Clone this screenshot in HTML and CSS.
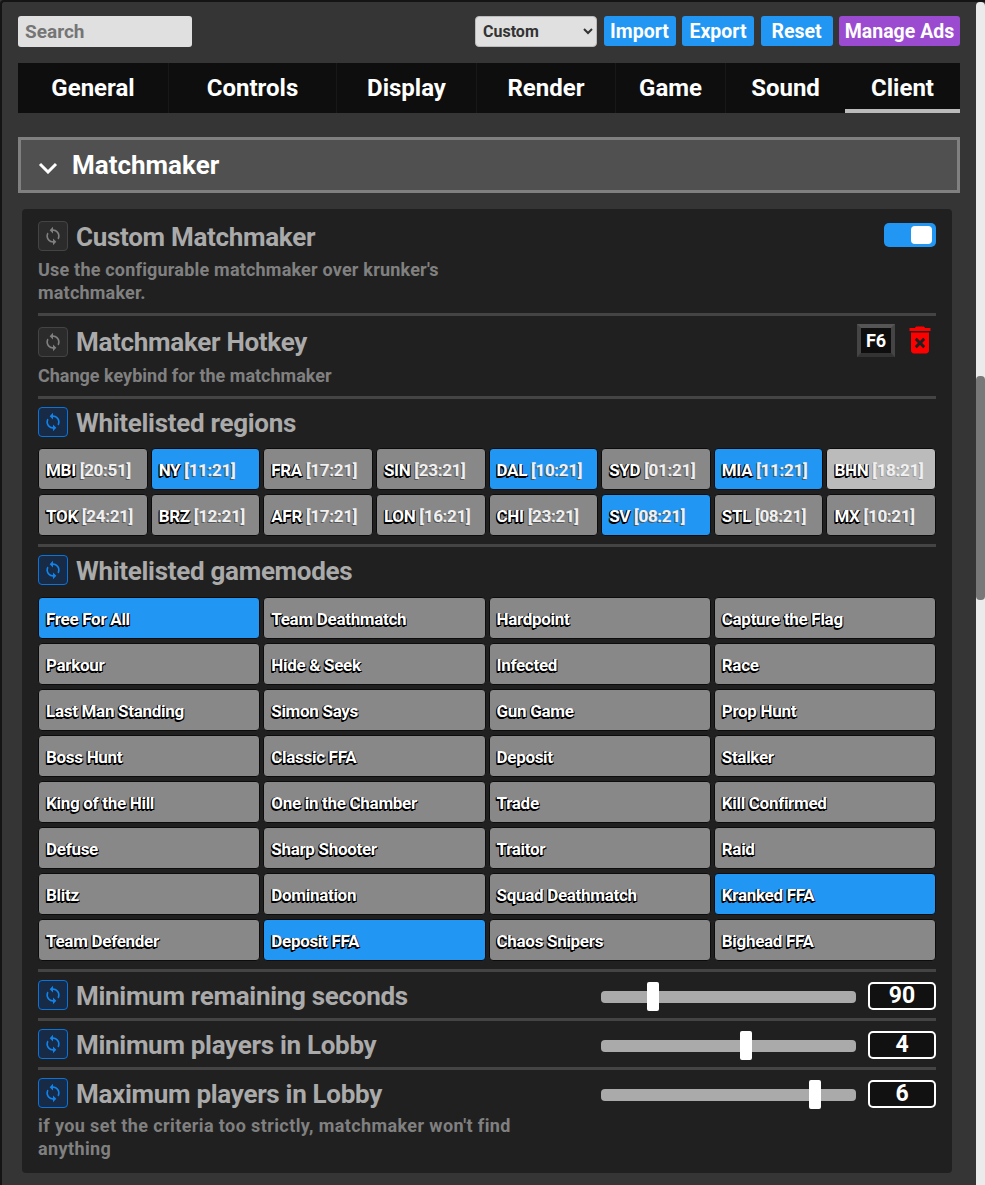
FILE: index.html
```html
<!DOCTYPE html>
<html lang="en">
<head>
    <meta charset="UTF-8">
    <meta name="viewport" content="width=device-width, initial-scale=1.0">
    <title>Settings</title>
    <link rel="stylesheet" href="styles.css">
</head>
<body>
    <svg class="icon-defs" width="0" height="0">
        <symbol id="sync" viewBox="0 0 24 24">
            <path d="M12 4V1L8 5l4 4V6c3.31 0 6 2.69 6 6 0 1.01-.25 1.97-.7 2.8l1.46 1.46C19.54 15.03 20 13.57 20 12c0-4.42-3.58-8-8-8zm0 14c-3.31 0-6-2.69-6-6 0-1.01.25-1.97.7-2.8L5.24 7.74C4.46 8.97 4 10.43 4 12c0 4.42 3.58 8 8 8v3l4-4-4-4v3z"/>
        </symbol>
    </svg>

    <div class="page">
        <div class="window">
            <div class="toolbar">
                <input class="search" type="text" placeholder="Search">
                <select class="preset">
                    <option>Custom</option>
                    <option>Default</option>
                </select>
                <div class="btn">Import</div>
                <div class="btn">Export</div>
                <div class="btn">Reset</div>
                <div class="btn btn-ads">Manage Ads</div>
            </div>

            <div class="tabs">
                <div class="tab">General</div>
                <div class="tab">Controls</div>
                <div class="tab">Display</div>
                <div class="tab">Render</div>
                <div class="tab">Game</div>
                <div class="tab">Sound</div>
                <div class="tab active">Client</div>
            </div>

            <div class="section-head">
                <svg class="chevron" width="20" height="12" viewBox="0 0 20 12">
                    <polyline points="2,2 10,10 18,2"/>
                </svg>
                <span>Matchmaker</span>
            </div>

            <div class="panel">
                <div class="row">
                    <div class="row-head">
                        <div class="reset-btn"><svg><use href="#sync"/></svg></div>
                        <div class="row-title">Custom Matchmaker</div>
                        <div class="toggle"><div class="knob"></div></div>
                    </div>
                    <div class="row-desc desc-short">Use the configurable matchmaker over krunker's matchmaker.</div>
                </div>

                <div class="row">
                    <div class="row-head hotkey">
                        <div class="reset-btn"><svg><use href="#sync"/></svg></div>
                        <div class="row-title">Matchmaker Hotkey</div>
                        <div class="key">F6</div>
                        <svg class="trash" width="36" height="36" viewBox="0 0 24 24">
                            <path d="M6 19c0 1.1.9 2 2 2h8c1.1 0 2-.9 2-2V7H6v12zm2.46-7.12l1.41-1.41L12 12.59l2.12-2.12 1.41 1.41L13.41 14l2.12 2.12-1.41 1.41L12 15.41l-2.12 2.12-1.41-1.41L10.59 14l-2.13-2.12zM15.5 4l-1-1h-5l-1 1H5v2h14V4z"/>
                        </svg>
                    </div>
                    <div class="row-desc">Change keybind for the matchmaker</div>
                </div>

                <div class="row">
                    <div class="row-head">
                        <div class="reset-btn on"><svg><use href="#sync"/></svg></div>
                        <div class="row-title">Whitelisted regions</div>
                    </div>
                    <div class="chips regions">
                        <div class="chip">MBI <span class="time">[20:51]</span></div>
                        <div class="chip on">NY <span class="time">[11:21]</span></div>
                        <div class="chip">FRA <span class="time">[17:21]</span></div>
                        <div class="chip">SIN <span class="time">[23:21]</span></div>
                        <div class="chip on">DAL <span class="time">[10:21]</span></div>
                        <div class="chip">SYD <span class="time">[01:21]</span></div>
                        <div class="chip on">MIA <span class="time">[11:21]</span></div>
                        <div class="chip off">BHN <span class="time">[18:21]</span></div>
                        <div class="chip">TOK <span class="time">[24:21]</span></div>
                        <div class="chip">BRZ <span class="time">[12:21]</span></div>
                        <div class="chip">AFR <span class="time">[17:21]</span></div>
                        <div class="chip">LON <span class="time">[16:21]</span></div>
                        <div class="chip">CHI <span class="time">[23:21]</span></div>
                        <div class="chip on">SV <span class="time">[08:21]</span></div>
                        <div class="chip">STL <span class="time">[08:21]</span></div>
                        <div class="chip">MX <span class="time">[10:21]</span></div>
                    </div>
                </div>

                <div class="row">
                    <div class="row-head">
                        <div class="reset-btn on"><svg><use href="#sync"/></svg></div>
                        <div class="row-title">Whitelisted gamemodes</div>
                    </div>
                    <div class="chips modes">
                        <div class="chip on">Free For All</div>
                        <div class="chip">Team Deathmatch</div>
                        <div class="chip">Hardpoint</div>
                        <div class="chip">Capture the Flag</div>
                        <div class="chip">Parkour</div>
                        <div class="chip">Hide &amp; Seek</div>
                        <div class="chip">Infected</div>
                        <div class="chip">Race</div>
                        <div class="chip">Last Man Standing</div>
                        <div class="chip">Simon Says</div>
                        <div class="chip">Gun Game</div>
                        <div class="chip">Prop Hunt</div>
                        <div class="chip">Boss Hunt</div>
                        <div class="chip">Classic FFA</div>
                        <div class="chip">Deposit</div>
                        <div class="chip">Stalker</div>
                        <div class="chip">King of the Hill</div>
                        <div class="chip">One in the Chamber</div>
                        <div class="chip">Trade</div>
                        <div class="chip">Kill Confirmed</div>
                        <div class="chip">Defuse</div>
                        <div class="chip">Sharp Shooter</div>
                        <div class="chip">Traitor</div>
                        <div class="chip">Raid</div>
                        <div class="chip">Blitz</div>
                        <div class="chip">Domination</div>
                        <div class="chip">Squad Deathmatch</div>
                        <div class="chip on">Kranked FFA</div>
                        <div class="chip">Team Defender</div>
                        <div class="chip on">Deposit FFA</div>
                        <div class="chip">Chaos Snipers</div>
                        <div class="chip">Bighead FFA</div>
                    </div>
                </div>

                <div class="row">
                    <div class="row-head">
                        <div class="reset-btn on"><svg><use href="#sync"/></svg></div>
                        <div class="row-title">Minimum remaining seconds</div>
                        <input class="slider" type="range" min="0" max="480" value="90">
                        <div class="slider-value">90</div>
                    </div>
                </div>

                <div class="row">
                    <div class="row-head">
                        <div class="reset-btn on"><svg><use href="#sync"/></svg></div>
                        <div class="row-title">Minimum players in Lobby</div>
                        <input class="slider" type="range" min="0" max="7" value="4">
                        <div class="slider-value">4</div>
                    </div>
                </div>

                <div class="row last">
                    <div class="row-head">
                        <div class="reset-btn on"><svg><use href="#sync"/></svg></div>
                        <div class="row-title">Maximum players in Lobby</div>
                        <input class="slider" type="range" min="0" max="7" value="6">
                        <div class="slider-value">6</div>
                    </div>
                    <div class="row-desc desc-long">if you set the criteria too strictly, matchmaker won't find anything</div>
                </div>
            </div>
        </div>

        <div class="scrollbar"><div class="thumb"></div></div>
    </div>
</body>
</html>
```

FILE: styles.css
```css
:root {
    --blue: #2196f3;
    --chip-grey: #888888;
    --divider: #444444;
    --game-font: Roboto, 'Liberation Sans', sans-serif;
}

* {
    margin: 0;
    padding: 0;
    box-sizing: border-box;
    font-family: var(--game-font);
    font-weight: bold;
}

html, body {
    height: 100%;
    overflow: hidden;
    background-color: #353535;
}

.icon-defs {
    display: block;
    height: 0;
}

.page {
    display: flex;
    height: 100vh;
    border-top: 2px solid #141414;
    border-left: 2px solid #141414;
    border-top-left-radius: 4px;
}

.window {
    width: 974px;
    padding: 14px 16px 0;
}

/* top row */
.toolbar {
    display: flex;
    align-items: flex-start;
    gap: 6.5px;
}

.search {
    width: 174px;
    height: 31px;
    margin-right: auto;
    padding: 0 7px;
    font-size: 19px;
    background: #e0e0e0;
    border: none;
    border-radius: 3px;
}

.search::placeholder {
    color: #757575;
}

.preset {
    width: 122px;
    height: 31px;
    padding-left: 3px;
    font-size: 16px;
    color: #333;
    background: #e0e0e0;
    border: 1px solid #bbb;
    border-radius: 4px;
}

.btn {
    width: 72px;
    height: 30px;
    line-height: 31px;
    text-align: center;
    font-size: 19.5px;
    white-space: nowrap;
    color: #fff;
    background: var(--blue);
    border-radius: 3px;
}

.btn-ads {
    width: 121px;
    background: #9b4bd0;
}

/* tabs */
.tabs {
    display: grid;
    grid-template-columns: 150px 168px 140px 139px 110px 120px 115px;
    height: 50px;
    margin-top: 16px;
    background: #0e0e0e;
}

.tab {
    height: 50px;
    line-height: 50px;
    text-align: center;
    font-size: 24px;
    color: #fff;
    border-left: 1px solid #181818;
}

.tab:first-child {
    border-left: none;
}

.tab.active {
    border-left: none;
    border-bottom: 4px solid #bbb;
}

/* section header */
.section-head {
    display: flex;
    align-items: center;
    height: 56px;
    margin-top: 24px;
    padding-left: 17px;
    font-size: 26px;
    color: #fff;
    background: #505050;
    border: 3px solid #808080;
}

.chevron {
    margin-top: 6px;
    margin-right: 14px;
}

.chevron polyline {
    fill: none;
    stroke: #fff;
    stroke-width: 3;
}

/* settings panel */
.panel {
    margin: 16px 8px 0 4px;
    padding: 4px 16px 0;
    background: #202020;
    border-radius: 4px;
}

.row {
    padding: 8px 0;
    border-bottom: 3px solid var(--divider);
}

.row.last {
    padding-bottom: 12px;
    border-bottom: none;
}

.row-head {
    display: flex;
    align-items: center;
    height: 30px;
}

.row-head.hotkey {
    align-items: flex-end;
    height: 33px;
}

.row-title {
    margin-left: 8px;
    margin-right: auto;
    padding-top: 2px;
    font-size: 26px;
    line-height: 30px;
    letter-spacing: -0.3px;
    color: #aaaaaa;
}

.row-desc {
    margin-top: 7px;
    padding-bottom: 1px;
    line-height: 23px;
    font-size: 18px;
    color: #808080;
}

.row-desc.desc-short {
    max-width: 445px;
    letter-spacing: 0.2px;
}

.row-desc.desc-long {
    max-width: 490px;
    margin-top: 6px;
    letter-spacing: 0.4px;
}

.reset-btn {
    flex: none;
    width: 30px;
    height: 30px;
    padding: 4px;
    background: #2b2b2b;
    border: 1px solid #444;
    border-radius: 4px;
}

.reset-btn svg {
    display: block;
    width: 20px;
    height: 20px;
    fill: #808080;
}

.reset-btn.on {
    background: #172a46;
    border-color: #0a74da;
}

.reset-btn.on svg {
    fill: #1283e8;
}

.toggle {
    display: flex;
    justify-content: flex-end;
    align-items: center;
    width: 52px;
    height: 24px;
    margin-bottom: 3px;
    padding-right: 4px;
    background: var(--blue);
    border-radius: 5px;
}

.knob {
    width: 21px;
    height: 18px;
    background: #fff;
    border-radius: 4px;
}

.key {
    width: 38px;
    height: 33px;
    margin-right: 7px;
    line-height: 25px;
    text-align: center;
    font-size: 18px;
    color: #fff;
    background: #0e0e0e;
    border-style: solid;
    border-width: 4px;
    border-color: #555 #444 #333 #444;
}

.trash {
    margin-right: -2px;
    margin-bottom: -1px;
    fill: #ff0000;
}

/* region and gamemode buttons */
.chips {
    display: grid;
    gap: 4px 3px;
    margin-top: 11px;
}

.chips.regions {
    grid-template-columns: repeat(8, minmax(0, 1fr));
}

.chips.modes {
    grid-template-columns: repeat(4, minmax(0, 1fr));
    margin-top: 12px;
}

.chip {
    height: 42px;
    padding-left: 7px;
    line-height: 42px;
    white-space: nowrap;
    overflow: hidden;
    font-size: 17px;
    letter-spacing: -0.3px;
    color: #fff;
    text-shadow: -1px 1px 0 #000, 1px 1px 0 #000, -1px 0 0 #000, -1px 2px 0 #000;
    background: var(--chip-grey);
    border: 1px solid #0c0c0c;
    border-radius: 4px;
}

.chip.on {
    background: var(--blue);
}

.chip.off {
    background: #bbbbbb;
}

.time {
    text-shadow: -1px 1px 0 #555;
    color: #f0f0f0;
}

.chip.off .time {
    text-shadow: -1px 1px 0 #999;
}

/* sliders */
.slider {
    flex: none;
    -webkit-appearance: none;
    appearance: none;
    width: 255px;
    height: 30px;
    margin: 3px 12px 0 0;
    background: transparent;
}

.slider::-webkit-slider-runnable-track {
    height: 12px;
    background: #aaaaaa;
    border-radius: 4px;
}

.slider::-webkit-slider-thumb {
    -webkit-appearance: none;
    width: 12px;
    height: 29px;
    margin-top: -8.5px;
    background: #fff;
    border-radius: 2px;
}

.slider-value {
    width: 68px;
    height: 28px;
    margin-top: 2px;
    line-height: 24px;
    text-align: center;
    font-size: 23px;
    color: #fff;
    background: #111;
    border: 2px solid #fff;
    border-radius: 5px;
}

/* the page's own scrollbar */
.scrollbar {
    width: 9px;
    padding-top: 374px;
    background: #ebebeb;
    border-radius: 4px 4px 0 0;
}

.thumb {
    height: 224px;
    background: #787878;
    border-radius: 4px;
}
```
